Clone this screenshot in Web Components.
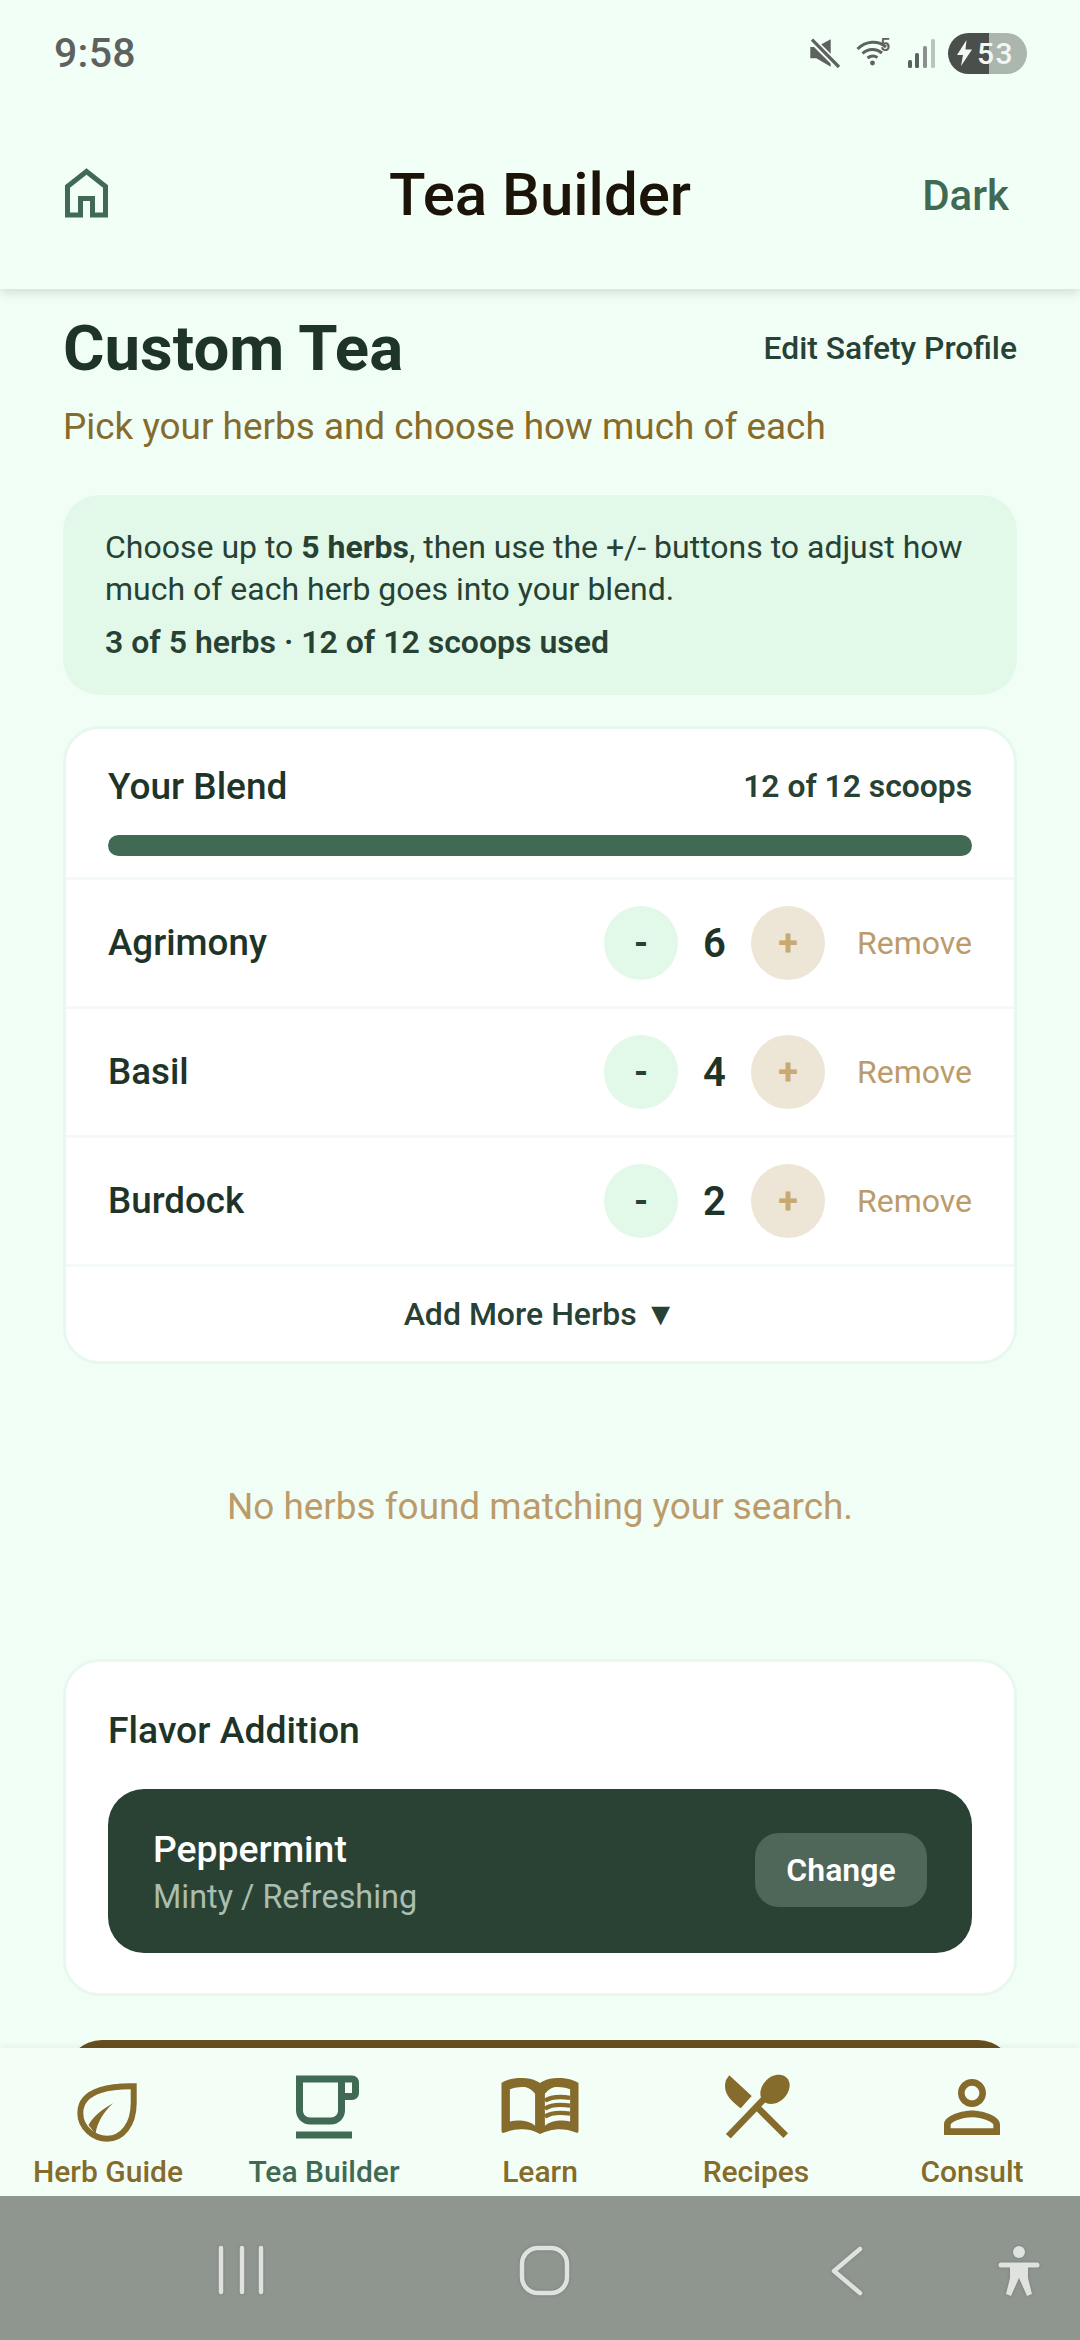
<!DOCTYPE html>
<html lang="en"><head><meta charset="utf-8"><title>Tea Builder</title>
<style>
html,body{margin:0;padding:0;width:1080px;height:2340px;overflow:hidden;background:#f1fef5;font-family:Roboto,"Liberation Sans",sans-serif}
</style></head><body>
<tea-app>
  <status-bar slot="top"></status-bar>
  <app-header slot="top" title-text="Tea Builder" action="Dark"></app-header>
  <intro-head></intro-head>
  <info-box>Choose up to <b>5 herbs</b>, then use the +/- buttons to adjust how<br>much of each herb goes into your blend.<span slot="status">3 of 5 herbs · 12 of 12 scoops used</span></info-box>
  <blend-card>
    <herb-row name="Agrimony" count="6"></herb-row>
    <herb-row name="Basil" count="4"></herb-row>
    <herb-row name="Burdock" count="2"></herb-row>
  </blend-card>
  <empty-note>No herbs found matching your search.</empty-note>
  <flavor-card></flavor-card>
  <next-card></next-card>
  <tab-bar slot="bottom">
    <tab-item label="Herb Guide" icon="leaf"></tab-item>
    <tab-item label="Tea Builder" icon="cup" active></tab-item>
    <tab-item label="Learn" icon="book"></tab-item>
    <tab-item label="Recipes" icon="food"></tab-item>
    <tab-item label="Consult" icon="person"></tab-item>
  </tab-bar>
  <nav-bar slot="bottom"></nav-bar>
</tea-app>
<script>
function def(name, css, html){
  customElements.define(name, class extends HTMLElement{
    constructor(){super();this.attachShadow({mode:'open'});}
    connectedCallback(){
      const h = typeof html==='function'?html(this):html;
      this.shadowRoot.innerHTML = '<style>'+css+'</style>'+h;
    }
  });
}
def('tea-app',`
:host{display:flex;flex-direction:column;width:1080px;height:2340px;overflow:hidden;color:#1e3428}
.top{position:relative;z-index:2;display:block;flex:none;background:#f2fff6;box-shadow:0 3px 10px rgba(0,0,0,.14)}
main{flex:1;min-height:0;overflow:hidden;padding:0 63px;display:block}
.bottom{position:relative;z-index:2;flex:none}
`,`<div class="top"><slot name="top"></slot></div><main><slot></slot></main><div class="bottom"><slot name="bottom"></slot></div>`);

def('status-bar',`
:host{display:flex;align-items:center;height:106px;box-sizing:border-box;padding:0 53px 0 54px;color:#5d625f}
.t{font-size:41px;font-weight:500;flex:1;letter-spacing:.3px}
.i{display:flex;align-items:center}
svg{display:block;flex:none}
.bat{width:79px;height:41px;border-radius:21px;margin-left:12px;background:linear-gradient(90deg,#4b4f4c 0 41px,#abb6ae 41px);color:#f2f7f3;display:flex;align-items:center;font-size:30px;letter-spacing:1.5px;font-weight:500;padding-left:9px;box-sizing:border-box;gap:5px}
.w{position:relative;width:38px;height:34px;margin-left:13px}
.w span{position:absolute;left:25px;top:0;font-size:18px;font-weight:500;line-height:18px}
`,`<span class="t">9:58</span><div class="i">
<svg width="34" height="34" viewBox="0 0 34 34"><path d="M2.3 11H8.3L22.7 3.3V30.7L8.3 22.3H2.3Z" fill="#5d625f"/><path d="M3 3L32 32" stroke="#f2fff6" stroke-width="7"/><path d="M4 3.7L31 31" stroke="#5d625f" stroke-width="3.2"/></svg>
<div class="w"><svg width="34" height="34" viewBox="0 0 34 34" fill="none" stroke="#5d625f" stroke-width="3"><path d="M2.5 13C11 4.5 23 4 31 11"/><path d="M7.5 17.5C13 12.5 21 12 27 17"/><path d="M12.5 22C16 19.5 19 19.3 22.5 21.5"/><circle cx="17.5" cy="27" r="2.4" fill="#5d625f" stroke="none"/></svg><span>5</span></div>
<svg width="29" height="31" viewBox="0 0 29 31" style="margin-left:14px"><rect x="1" y="22" width="4" height="8" rx="1.5" fill="#5d625f"/><rect x="8" y="15" width="4" height="15" rx="1.5" fill="#5d625f"/><rect x="16" y="8" width="4" height="22" rx="1.5" fill="#8b918d"/><rect x="24" y="1" width="4" height="29" rx="1.5" fill="#bcc4be"/></svg>
<div class="bat"><svg width="15" height="26" viewBox="0 0 15 26"><path d="M9.5 0L0 15H6L4 26L15 9.5H8.5Z" fill="#f2f7f3"/></svg><span>53</span></div>
</div>`);

def('app-header',`
:host{display:grid;grid-template-columns:1fr auto 1fr;align-items:center;height:183px;box-sizing:border-box;padding:0 58px 5px 58px}
h1{margin:0;font-size:60px;font-weight:500;color:#1c1408;line-height:70px}
.a{justify-self:end;font-size:42px;font-weight:500;color:#416a54;margin-right:13px}
svg{display:block}
`,el=>`<svg width="56" height="60" viewBox="0 1.5 56 60" fill="none" stroke="#416a54" stroke-width="5"><path d="M9.5 51.5V23L28.5 8L47.5 23V51.5H34.5V35H22.5V51.5Z"/></svg><h1>${el.getAttribute('title-text')}</h1><span class="a">${el.getAttribute('action')}</span>`);

def('intro-head',`
:host{display:block;padding-top:21px}
.r{display:flex;justify-content:space-between;align-items:center;height:78px}
h2{margin:0;font-size:63.5px;font-weight:700;color:#1e3428;line-height:78px}
.e{font-size:31.8px;font-weight:500;color:#274235;margin-bottom:2px}
p{margin:0;font-size:36.9px;line-height:48px;color:#856b2c;padding-top:15px}
`,`<div class="r"><h2>Custom Tea</h2><span class="e">Edit Safety Profile</span></div><p>Pick your herbs and choose how much of each</p>`);

def('info-box',`
:host{display:block;margin-top:44px;background:#e2f9e9;border-radius:36px;padding:31px 42px 0;height:200px;box-sizing:border-box;font-size:32px;line-height:42px;color:#274235}
.s{display:block;margin-top:11px;font-weight:600}
::slotted(b){font-weight:700}
`,`<slot></slot><span class="s"><slot name="status"></slot></span>`);

def('blend-card',`
:host{display:block;margin-top:31px;background:#fff;border:3px solid #e8f8ee;border-radius:36px;overflow:hidden}
.h{display:flex;justify-content:space-between;align-items:center;padding:8px 42px 0;height:106px;box-sizing:border-box}
.h b{font-size:37px;font-weight:500;color:#1e3428}
.h span{font-size:31.8px;font-weight:600;color:#274235}
.p{height:21px;margin:0 42px 21px;background:#416a54;border-radius:11px}
.add{display:flex;align-items:center;justify-content:center;height:94px;font-size:32px;font-weight:500;color:#274235;box-sizing:border-box}
.l{border-top:3px solid #f1fbf4}
`,`<div class="h"><b>Your Blend</b><span>12 of 12 scoops</span></div><div class="p"></div><div class="l"><slot></slot></div><div class="add">Add More Herbs ▼</div>`);

def('herb-row',`
:host{display:flex;align-items:center;height:129px;padding:0 42px;box-sizing:border-box;border-bottom:3px solid #f4fbf6}
.n{flex:1;font-size:36.75px;font-weight:500;color:#1e3428;margin-top:-2px}
.b{width:74px;height:74px;border-radius:50%;display:flex;align-items:center;justify-content:center;font-size:36px;font-weight:700}
.m{background:#e2f9e9;color:#274235}
.pl{background:#ede5d5;color:#c9a96e}
.c{width:73px;text-align:center;font-size:40px;font-weight:600;color:#1e3428}
.r{width:115px;margin-left:32px;text-align:right;font-size:32px;color:#bc9b6a}
`,el=>`<span class="n">${el.getAttribute('name')}</span><span class="b m">-</span><span class="c">${el.getAttribute('count')}</span><span class="b pl">+</span><span class="r">Remove</span>`);

def('empty-note',`
:host{display:block;margin-top:96px;height:94px;text-align:center;font-size:36.9px;line-height:94px;color:#bc9b6a}
`,`<slot></slot>`);

def('flavor-card',`
:host{display:block;margin-top:105px;background:#fff;border:3px solid #e8f8ee;border-radius:36px;padding:44px 42px 0;height:337px;box-sizing:border-box}
h3{margin:0;font-size:37.3px;font-weight:500;line-height:48px;color:#1e3428}
.d{margin-top:35px;height:164px;background:#294234;border-radius:36px;display:flex;align-items:center;justify-content:space-between;padding:0 45px;box-sizing:border-box}
.x{padding-top:5px}
.n{font-size:37.3px;font-weight:500;color:#fff;line-height:47px}
.s{font-size:32.4px;color:#a9bdb0;line-height:49px}
.c{width:172px;height:74px;border-radius:24px;background:#4f6759;color:#fff;font-size:32px;font-weight:600;display:flex;align-items:center;justify-content:center;margin-top:-2px}
`,`<h3>Flavor Addition</h3><div class="d"><div class="x"><div class="n">Peppermint</div><div class="s">Minty / Refreshing</div></div><div class="c">Change</div></div>`);

def('next-card',`
:host{display:block;margin:44px 3px 0;height:120px;background:#665020;border-radius:36px 36px 0 0}
`,``);

def('tab-bar',`
:host{display:grid;grid-template-columns:repeat(5,216px);height:148px;background:#f3fff6;box-shadow:0 -2px 6px rgba(0,0,0,.05)}
`,`<slot></slot>`);

const P={
 leaf:`<path d="M67.7 21.3C50 21 14.3 23 14.3 48C14.3 63 28 73.7 41 73.7C56 73.7 67.7 60 67.7 38Z" fill="none" stroke="currentColor" stroke-width="6"/><path d="M47.3 38.3C36 44 27 52 22.5 60L29.5 69C31 58 38 46 47.3 38.3Z" fill="currentColor"/>`,
 cup:`<g transform="scale(3.5)"><path fill="currentColor" d="M20 3H4v10c0 2.21 1.79 4 4 4h6c2.21 0 4-1.79 4-4v-3h2c1.11 0 2-.9 2-2V5c0-1.11-.89-2-2-2zm-4 10c0 1.1-.9 2-2 2H8c-1.1 0-2-.9-2-2V5h10v8zm4-5h-2V5h2v3zM4 19h16v2H4z"/></g>`,
 book:`<g transform="translate(0 -1.85) scale(3.5 3.3)"><path fill="currentColor" fill-rule="evenodd" d="M21 5c-1.11-.35-2.33-.5-3.5-.5-1.95 0-4.05.4-5.5 1.5-1.45-1.1-3.55-1.5-5.5-1.5S2.45 4.9 1 6v14.65c0 .25.25.5.5.5.1 0 .15-.05.25-.05C3.1 20.45 5.05 20 6.5 20c1.95 0 4.05.4 5.5 1.5 1.35-.85 3.8-1.5 5.5-1.5 1.65 0 3.35.3 4.75 1.05.1.05.15.05.25.05.25 0 .5-.25.5-.5V6c-.6-.45-1.25-.75-2-1zM3.4 7.9C5 7.2 7 7.1 8 7.3C9 7.5 10 8.4 10.6 9.3V19C9.5 18 8 17.5 6.5 17.4C5.5 17.3 4.5 17.4 3.4 17.7ZM20.6 7.9C19 7.2 17 7.1 16 7.3C15 7.5 14 8.4 13.4 9.3V19C14.5 18 16 17.5 17.5 17.4C18.5 17.3 19.5 17.4 20.6 17.7Z"/><path fill="none" stroke="currentColor" stroke-width="1.3" d="M13.4 11.4C15 10.3 17.5 10 20.6 10.5M13.4 13.8C15 12.7 17.5 12.4 20.6 12.9M13.4 16.2C15 15.1 17.5 14.8 20.6 15.3"/></g>`,
 food:`<path d="M15.3 10.3L37.7 31L26.7 43.3C17 36 8 28 12 15Z" fill="currentColor"/><path d="M42 41L71.7 70.7M50 34L14.3 71.3" stroke="currentColor" stroke-width="6.6" fill="none"/><ellipse cx="61" cy="24.3" rx="16.5" ry="12.5" transform="rotate(-45 61 24.3)" fill="currentColor"/>`,
 person:`<g transform="scale(3.5)"><path fill="currentColor" d="M12 5.9c1.16 0 2.1.94 2.1 2.1s-.94 2.1-2.1 2.1S9.9 9.16 9.9 8s.94-2.1 2.1-2.1m0 9c2.97 0 6.1 1.46 6.1 2.1v1.1H5.9V17c0-.64 3.13-2.1 6.1-2.1M12 4C9.79 4 8 5.79 8 8s1.79 4 4 4 4-1.79 4-4-1.79-4-4-4zm0 9c-2.67 0-8 1.34-8 4v3h16v-3c0-2.66-5.33-4-8-4z"/></g>`
};
def('tab-item',`
:host{display:flex;flex-direction:column;align-items:center;color:#856b2c;padding-top:17px;box-sizing:border-box}
:host([active]){color:#416a54}
svg{display:block;flex:none}
span{font-size:30px;font-weight:500;line-height:36px;margin-top:5px;white-space:nowrap}
`,el=>`<svg width="84" height="84" viewBox="0 0 84 84">${P[el.getAttribute('icon')]}</svg><span>${el.getAttribute('label')}</span>`);

def('nav-bar',`
:host{display:block;height:144px;background:#8f9690;position:relative}
svg{position:absolute;left:0;top:0;filter:drop-shadow(0 0 1.5px #737a75)}
`,`<svg width="1080" height="144" viewBox="0 0 1080 144" fill="none" stroke="#dfe2df" stroke-linecap="round" stroke-linejoin="round">
<path d="M221 52V96M242 52V96M261 52V96" stroke-width="4.5"/>
<rect x="522" y="52" width="45" height="45" rx="16" stroke-width="4.5"/>
<path d="M860 53L834 75L860 97" stroke-width="4.5"/>
<circle cx="1019" cy="56" r="6" fill="#dfe2df" stroke="none"/>
<path d="M1001 69H1037" stroke-width="5"/>
<path d="M1010 69H1028V82L1032 98L1027 100L1019 82L1011 100L1006 98L1010 82Z" fill="#dfe2df" stroke="none"/>
</svg>`);
</script>
</body></html>
